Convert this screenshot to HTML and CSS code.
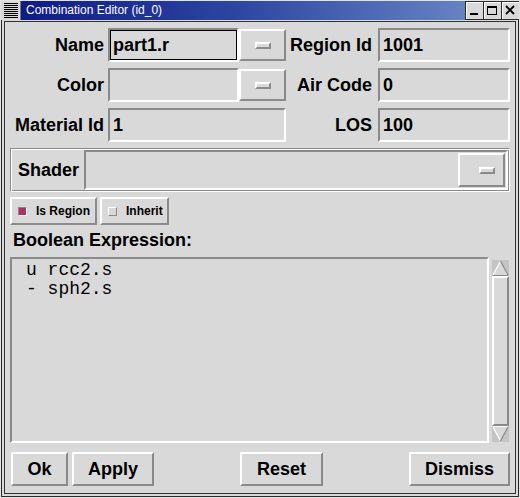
FILE: index.html
```html
<!DOCTYPE html>
<html>
<head>
<meta charset="utf-8">
<link rel="stylesheet" href="styles.css">
</head>
<body>
<div class="window">
  <div class="titlebar">
    <div class="wm-icon">
      <svg width="14" height="15" viewBox="0 0 14 15"><g fill="#000"><rect x="0" y="0" width="14" height="1"/><rect x="0" y="2" width="14" height="1"/><rect x="0" y="4" width="14" height="1"/><rect x="0" y="6" width="14" height="1"/><rect x="0" y="8" width="14" height="1"/><rect x="0" y="10" width="14" height="1"/><rect x="0" y="12" width="14" height="1"/><rect x="0" y="14" width="14" height="1"/></g></svg>
    </div>
    <div class="title">Combination Editor (id_0)</div>
    <div class="wm-btns">
      <div class="wm-btn"><svg width="16" height="17" viewBox="0 0 16 17"><rect x="4" y="11" width="8" height="2" fill="#000"/></svg></div>
      <div class="wm-btn"><svg width="16" height="17" viewBox="0 0 16 17"><rect x="3.5" y="4.5" width="9" height="8" fill="none" stroke="#000"/><rect x="3" y="4" width="10" height="2" fill="#000"/></svg></div>
      <div class="wm-btn"><svg width="16" height="17" viewBox="0 0 16 17"><path d="M4 4 L12 12 M12 4 L4 12" stroke="#000" stroke-width="1.8"/></svg></div>
    </div>
  </div>
  <div class="client">
    <div class="fields">
      <div class="lbl">Name</div>
      <div class="combo"><div class="entry focus">part1.r</div><div class="mbtn"><span class="ind"></span></div></div>
      <div class="lbl lbl-r">Region Id</div>
      <div class="entry">1001</div>
      <div class="lbl">Color</div>
      <div class="combo"><div class="entry"></div><div class="mbtn"><span class="ind"></span></div></div>
      <div class="lbl lbl-r">Air Code</div>
      <div class="entry">0</div>
      <div class="lbl">Material Id</div>
      <div class="entry">1</div>
      <div class="lbl lbl-r">LOS</div>
      <div class="entry">100</div>
    </div>
    <div class="shader">
      <div class="lbl shader-lbl">Shader</div>
      <div class="entry shader-entry"><div class="mbtn shader-mbtn"><span class="ind"></span></div></div>
    </div>
    <div class="checks">
      <div class="check check-region"><span class="box on"></span>Is Region</div>
      <div class="check check-inherit"><span class="box"></span>Inherit</div>
    </div>
    <div class="section">Boolean Expression:</div>
    <div class="expr">
      <pre class="text">u rcc2.s
- sph2.s</pre>
      <div class="sb">
        <svg class="arrow" width="17" height="16" viewBox="0 0 17 16"><rect width="17" height="16" fill="#c4c4c4"/><polygon points="8.5,1 16,15 1,15" fill="#d9d9d9"/><path d="M1 15 L8.5 1" stroke="#fff" stroke-width="1.2"/><path d="M8.5 1 L16 15" stroke="#8a8a8a" stroke-width="1.2"/><path d="M1 15.5 H16" stroke="#8a8a8a"/></svg>
        <div class="thumb"></div>
        <svg class="arrow" width="17" height="16" viewBox="0 0 17 16"><rect width="17" height="16" fill="#c4c4c4"/><polygon points="1,1 16,1 8.5,15" fill="#d9d9d9"/><path d="M1 0.5 H16" stroke="#fff"/><path d="M1 1 L8.5 15" stroke="#fff" stroke-width="1.2"/><path d="M16 1 L8.5 15" stroke="#8a8a8a" stroke-width="1.2"/></svg>
      </div>
    </div>
    <div class="buttons">
      <div class="group"><div class="btn btn-ok">Ok</div><div class="btn btn-apply">Apply</div></div>
      <div class="btn btn-reset">Reset</div>
      <div class="btn btn-dismiss">Dismiss</div>
    </div>
  </div>
</div>
</body>
</html>
```
FILE: styles.css
```css
html, body {
  margin: 0;
  padding: 0;
}
body {
  width: 520px;
  height: 498px;
  overflow: hidden;
  background: #d9d9d9;
  font-family: "Liberation Sans", Arial, sans-serif;
  color: #000;
}
.window {
  box-sizing: border-box;
  width: 520px;
  height: 498px;
  border: 1px solid #e2e2e2;
  box-shadow: inset 0 0 0 1px #2b2b2b;
  padding: 0 3px 3px;
  display: flex;
  flex-direction: column;
  background: #d9d9d9;
}
.titlebar {
  height: 19px;
  margin: 0 -3px 1px;
  display: flex;
  background: linear-gradient(to right, #0b1785 0%, #2d45a0 45%, #7391cb 100%);
  flex: none;
}
.wm-icon {
  width: 19px;
  background: #d9d9d9;
  border-right: 1px solid #7a7a7a;
  display: flex;
  align-items: center;
  justify-content: center;
}
.title {
  flex: 1;
  color: #fff;
  font-size: 12px;
  line-height: 19px;
  padding-left: 5px;
  white-space: nowrap;
}
.wm-btns {
  display: flex;
}
.wm-btn {
  box-sizing: border-box;
  width: 18px;
  height: 19px;
  background: #d9d9d9;
  border: 1px solid #2b2b2b;
  border-right-width: 0;
  box-shadow: inset 1px 1px 0 #fff;
  display: flex;
}
.client {
  flex: 1;
  border: 1px solid #333;
  display: flex;
  flex-direction: column;
  min-height: 0;
}
.fields {
  display: grid;
  grid-template-columns: 91px 178px 84px 132px;
  grid-auto-rows: 34px;
  column-gap: 4px;
  row-gap: 6px;
  padding: 6px 0 0 8px;
}
.lbl {
  font-size: 18px;
  font-weight: bold;
  line-height: 34px;
  text-align: right;
  white-space: nowrap;
}
.lbl-r {
  padding-right: 2px;
}
.entry {
  box-sizing: border-box;
  border: 2px solid;
  border-color: #8a8a8a #fff #fff #8a8a8a;
  font-size: 18px;
  font-weight: bold;
  line-height: 30px;
  padding-left: 3px;
  white-space: nowrap;
}
.entry.focus {
  box-shadow: inset 0 0 0 1px #000;
}
.combo {
  display: flex;
}
.combo .entry {
  flex: 1;
}
.mbtn {
  box-sizing: border-box;
  width: 47px;
  margin: 1px 0;
  border: 2px solid;
  border-color: #fff #8a8a8a #8a8a8a #fff;
  display: flex;
  align-items: center;
  justify-content: center;
}
.ind {
  box-sizing: border-box;
  width: 16px;
  height: 7px;
  border: 2px solid;
  border-color: #fff #8a8a8a #8a8a8a #fff;
}
.shader {
  box-sizing: border-box;
  height: 44px;
  margin: 6px 5px 0 5px;
  border: 1px solid;
  border-color: #8a8a8a #fff #fff #8a8a8a;
  box-shadow: inset 1px 1px 0 #fff, inset -1px -1px 0 #8a8a8a;
  padding: 1px 1px 1px 7px;
  display: flex;
}
.shader-lbl {
  line-height: 40px;
  text-align: left;
  margin-right: 5px;
}
.shader-entry {
  flex: 1;
  display: flex;
  justify-content: flex-end;
  align-items: center;
  padding: 0;
}
.shader-mbtn {
  height: 34px;
  margin: 0 1px 0 0;
  justify-content: flex-end;
  padding-right: 8px;
}
.checks {
  display: flex;
  gap: 3px;
  height: 28px;
  margin: 5px 0 0 5px;
}
.check {
  box-sizing: border-box;
  border: 2px solid;
  border-color: #fff #8a8a8a #8a8a8a #fff;
  display: flex;
  align-items: center;
  padding-left: 6px;
  font-size: 12px;
  font-weight: bold;
  white-space: nowrap;
}
.check-region {
  width: 87px;
}
.check-inherit {
  width: 69px;
}
.box {
  box-sizing: border-box;
  width: 9px;
  height: 9px;
  margin-right: 9px;
  border: 1px solid;
  border-color: #fff #8a8a8a #8a8a8a #fff;
  background: #d9d9d9;
}
.box.on {
  background: #b03060;
  border-color: #8a8a8a #fff #fff #8a8a8a;
}
.section {
  font-size: 18px;
  font-weight: bold;
  line-height: 22px;
  margin: 4px 0 0 8px;
}
.expr {
  display: flex;
  height: 186px;
  margin: 6px 6px 0 5px;
}
.text {
  flex: 1;
  margin: 0;
  box-sizing: border-box;
  border: 2px solid;
  border-color: #8a8a8a #fff #fff #8a8a8a;
  font-family: "Liberation Mono", "Courier New", monospace;
  font-size: 18px;
  line-height: 19px;
  padding: 2px 0 0 14px;
  white-space: pre;
}
.sb {
  width: 17px;
  display: flex;
  flex-direction: column;
  margin: 3px 0 1px 3px;
}
.arrow {
  display: block;
  flex: none;
}
.thumb {
  flex: 1;
  border: 2px solid;
  border-color: #fff #8a8a8a #8a8a8a #fff;
}
.buttons {
  display: flex;
  justify-content: space-between;
  height: 34px;
  margin: 9px 5px 0 6px;
}
.group {
  display: flex;
  gap: 4px;
}
.btn {
  box-sizing: border-box;
  height: 34px;
  border: 2px solid;
  border-color: #fff #8a8a8a #8a8a8a #fff;
  font-size: 18px;
  font-weight: bold;
  line-height: 30px;
  text-align: center;
}
.btn-ok { width: 57px; }
.btn-apply { width: 82px; }
.btn-reset { width: 83px; }
.btn-dismiss { width: 101px; }
```
